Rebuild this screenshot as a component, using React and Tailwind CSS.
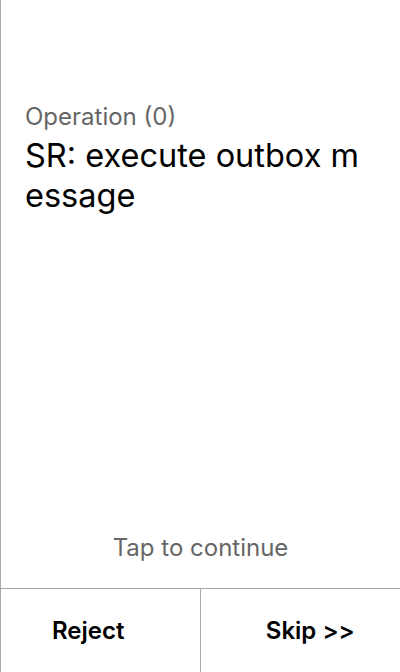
export default function App() {
  return (
    <div
      className="h-[672px] w-[400px] flex flex-col bg-white border-l border-[#a8a8a8] text-black"
      style={{ fontFamily: 'Inter, "Noto Sans", sans-serif' }}
    >
      <div className="flex-1 flex flex-col px-6 pt-[101px]">
        <p className="text-[24px] leading-[32px] text-[#666666]">Operation (0)</p>
        <h1 className="mt-[3px] mr-[14px] text-[32.5px] leading-[40px] break-all">SR: execute outbox message</h1>
        <div className="flex-1"></div>
        <p className="text-center text-[24px] leading-[32px] text-[#666666] mb-[24px]">Tap to continue</p>
      </div>
      <div className="h-[84px] grid grid-cols-2 border-t border-[#a8a8a8]">
        <button className="pr-6 text-[24px] font-semibold border-r border-[#a8a8a8]">Reject</button>
        <button className="pl-5 text-[24px] font-semibold">Skip &gt;&gt;</button>
      </div>
    </div>
  );
}
